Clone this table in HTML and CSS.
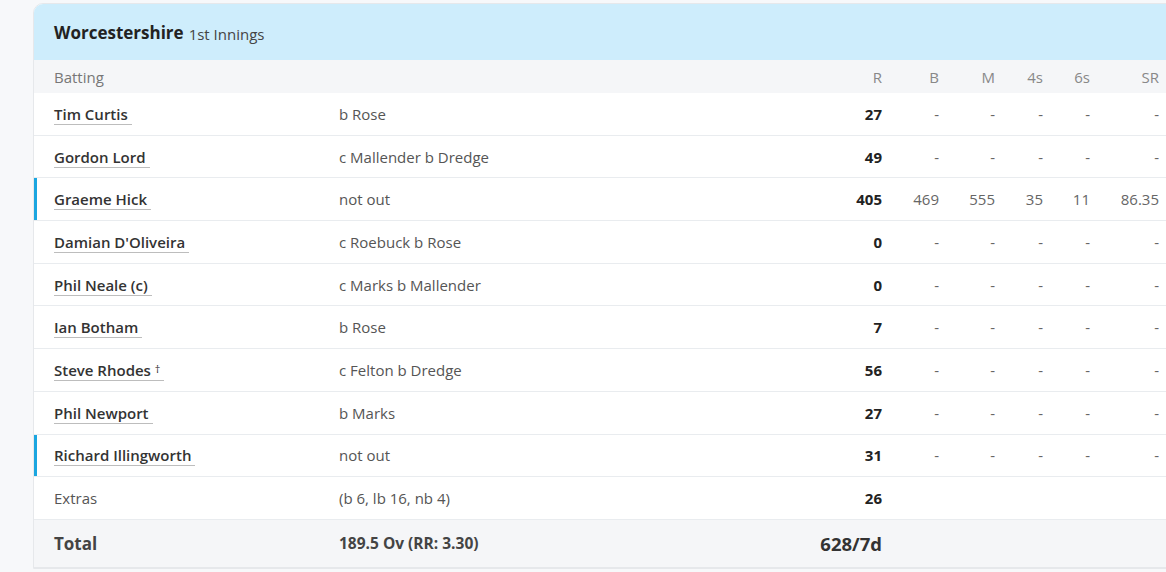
FILE: index.html
```html
<!DOCTYPE html>
<html lang="en">
<head>
    <meta charset="UTF-8">
    <meta name="viewport" content="width=device-width, initial-scale=1.0">
    <title>Worcestershire 1st Innings</title>
    <link rel="stylesheet" href="styles.css">
</head>
<body>
    <div class="page">
        <div class="scorecard">
            <div class="card-head">
                <span class="team">Worcestershire</span>
                <span class="innings">1st Innings</span>
            </div>

            <div class="row head-row">
                <span class="name-cell">Batting</span>
                <span></span>
                <span class="num">R</span>
                <span class="num">B</span>
                <span class="num">M</span>
                <span class="num">4s</span>
                <span class="num">6s</span>
                <span class="num">SR</span>
            </div>

            <div class="row">
                <span class="name-cell"><a class="player" href="#">Tim Curtis</a></span>
                <span class="how">b Rose</span>
                <span class="num runs">27</span>
                <span class="num">-</span><span class="num">-</span><span class="num">-</span><span class="num">-</span><span class="num">-</span>
            </div>
            <div class="row">
                <span class="name-cell"><a class="player" href="#">Gordon Lord</a></span>
                <span class="how">c Mallender b Dredge</span>
                <span class="num runs">49</span>
                <span class="num">-</span><span class="num">-</span><span class="num">-</span><span class="num">-</span><span class="num">-</span>
            </div>
            <div class="row not-out">
                <span class="name-cell"><a class="player" href="#">Graeme Hick</a></span>
                <span class="how">not out</span>
                <span class="num runs">405</span>
                <span class="num">469</span><span class="num">555</span><span class="num">35</span><span class="num">11</span><span class="num">86.35</span>
            </div>
            <div class="row">
                <span class="name-cell"><a class="player" href="#">Damian D'Oliveira</a></span>
                <span class="how">c Roebuck b Rose</span>
                <span class="num runs">0</span>
                <span class="num">-</span><span class="num">-</span><span class="num">-</span><span class="num">-</span><span class="num">-</span>
            </div>
            <div class="row">
                <span class="name-cell"><a class="player" href="#">Phil Neale (c)</a></span>
                <span class="how">c Marks b Mallender</span>
                <span class="num runs">0</span>
                <span class="num">-</span><span class="num">-</span><span class="num">-</span><span class="num">-</span><span class="num">-</span>
            </div>
            <div class="row">
                <span class="name-cell"><a class="player" href="#">Ian Botham</a></span>
                <span class="how">b Rose</span>
                <span class="num runs">7</span>
                <span class="num">-</span><span class="num">-</span><span class="num">-</span><span class="num">-</span><span class="num">-</span>
            </div>
            <div class="row">
                <span class="name-cell"><a class="player" href="#">Steve Rhodes <span class="dagger">†</span></a></span>
                <span class="how">c Felton b Dredge</span>
                <span class="num runs">56</span>
                <span class="num">-</span><span class="num">-</span><span class="num">-</span><span class="num">-</span><span class="num">-</span>
            </div>
            <div class="row">
                <span class="name-cell"><a class="player" href="#">Phil Newport</a></span>
                <span class="how">b Marks</span>
                <span class="num runs">27</span>
                <span class="num">-</span><span class="num">-</span><span class="num">-</span><span class="num">-</span><span class="num">-</span>
            </div>
            <div class="row not-out">
                <span class="name-cell"><a class="player" href="#">Richard Illingworth</a></span>
                <span class="how">not out</span>
                <span class="num runs">31</span>
                <span class="num">-</span><span class="num">-</span><span class="num">-</span><span class="num">-</span><span class="num">-</span>
            </div>

            <div class="row extras-row">
                <span class="name-cell">Extras</span>
                <span class="how">(b 6, lb 16, nb 4)</span>
                <span class="num runs">26</span>
            </div>

            <div class="row total-row">
                <span class="name-cell total-label">Total</span>
                <span class="overs">189.5 Ov (RR: 3.30)</span>
                <span class="num total-score">628/7d</span>
            </div>
        </div>
    </div>
</body>
</html>
```

FILE: styles.css
```css
html, body {
    margin: 0;
    background: #f7f8fa;
    overflow: hidden;
}
body {
    font-family: "Open Sans", "Noto Sans", Arial, sans-serif;
    color: #333;
}
.page {
    padding: 3px 0 0 33px;
}
.scorecard {
    width: 1150px;
    background: #fff;
    border: 1px solid #e6e8eb;
    border-radius: 10px 0 0 0;
    overflow: hidden;
}
.card-head {
    background: #ceedfc;
    height: 56px;
    display: flex;
    align-items: center;
    padding-left: 20px;
    gap: 5px;
}
.team {
    font-size: 17px;
    font-weight: 700;
    color: #222;
}
.innings {
    font-size: 15px;
    color: #444;
    padding-top: 3px;
}
.row {
    display: grid;
    grid-template-columns: 305px 463px 80px 57px 56px 48px 47px 69px 1fr;
    align-items: center;
    height: 42.7px;
    box-sizing: border-box;
    border-bottom: 1px solid #e9ecef;
    font-size: 15px;
    color: #555;
}
.name-cell {
    padding-left: 20px;
}
.num {
    text-align: right;
    color: #666;
}
.head-row {
    height: 33px;
    background: #f5f6f8;
    color: #777;
    border-bottom: none;
}
.head-row .num {
    color: #888;
}
.player {
    color: #333;
    font-weight: 600;
    font-size: 15px;
    text-decoration: none;
    border-bottom: 1px solid #bdbdbd;
    padding-right: 4px;
}
.dagger {
    font-size: 11px;
    vertical-align: 3px;
    font-weight: 400;
}
.runs {
    font-weight: 700;
    color: #222;
}
.not-out {
    box-shadow: inset 3px 0 0 #1ba6e0;
}
.total-row {
    height: 48px;
    background: #f5f6f8;
    border-bottom: 1px solid #e6e8eb;
}
.total-label {
    font-size: 17px;
    font-weight: 700;
    color: #444;
}
.overs {
    font-size: 15.5px;
    font-weight: 700;
    color: #444;
}
.total-score {
    font-size: 18.5px;
    font-weight: 700;
    color: #333;
}
```
